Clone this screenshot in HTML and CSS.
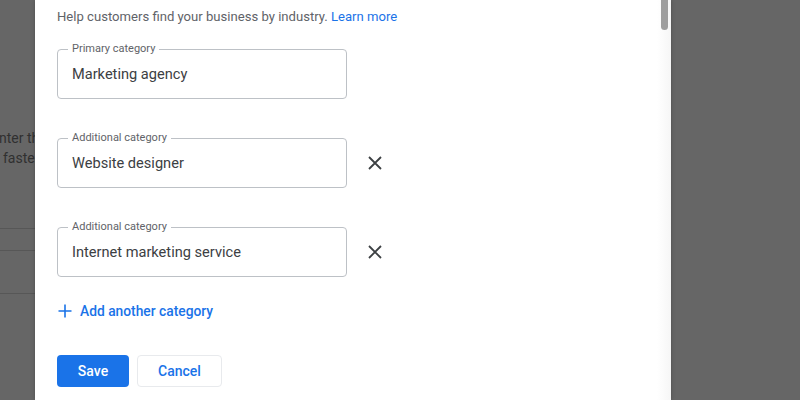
FILE: index.html
```html
<!DOCTYPE html>
<html lang="en">
<head>
<meta charset="utf-8">
<title>Business category</title>
<link rel="stylesheet" href="styles.css">
</head>
<body>
<div class="screen">
  <div class="backdrop-left">
    <div class="bg-text">
      <div class="bg-line1">Enter the</div>
      <div class="bg-line2">faster</div>
    </div>
    <div class="bg-rule rule-a"></div>
    <div class="bg-rule rule-b"></div>
    <div class="bg-rule rule-c"></div>
  </div>
  <div class="dialog">
    <div class="dialog-body">
      <p class="intro">Help customers find your business by industry. <a href="#">Learn more</a></p>
      <div class="fields">
        <div class="field-row">
          <div class="field">
            <span class="field-label">Primary category</span>
            <span class="field-value">Marketing agency</span>
          </div>
        </div>
        <div class="field-row">
          <div class="field">
            <span class="field-label">Additional category</span>
            <span class="field-value">Website designer</span>
          </div>
          <button class="remove" aria-label="Remove">
            <svg width="14" height="14" viewBox="0 0 14 14"><path d="M1 1L13 13M13 1L1 13" stroke="#3c4043" stroke-width="1.8" fill="none"/></svg>
          </button>
        </div>
        <div class="field-row">
          <div class="field">
            <span class="field-label">Additional category</span>
            <span class="field-value">Internet marketing service</span>
          </div>
          <button class="remove" aria-label="Remove">
            <svg width="14" height="14" viewBox="0 0 14 14"><path d="M1 1L13 13M13 1L1 13" stroke="#3c4043" stroke-width="1.8" fill="none"/></svg>
          </button>
        </div>
      </div>
      <button class="add">
        <svg width="14" height="14" viewBox="0 0 14 14"><path d="M7 0.5V13.5M0.5 7H13.5" stroke="#1a73e8" stroke-width="1.6" fill="none"/></svg>
        <span>Add another category</span>
      </button>
      <div class="actions">
        <button class="btn btn-primary">Save</button>
        <button class="btn btn-secondary">Cancel</button>
      </div>
    </div>
    <div class="scroll-track"><div class="scroll-thumb"></div></div>
  </div>
  <div class="backdrop-right"></div>
</div>
</body>
</html>
```
FILE: styles.css
```css
html, body {
  margin: 0;
  padding: 0;
}
body {
  width: 800px;
  height: 400px;
  overflow: hidden;
  background: #666666;
  font-family: Roboto, "Liberation Sans", Arial, sans-serif;
}
.screen {
  display: flex;
  height: 400px;
}
.backdrop-left {
  width: 35px;
  flex: none;
  overflow: hidden;
  position: relative;
}
.bg-text {
  padding-top: 128px;
  font-size: 14px;
  line-height: 20px;
  color: #303030;
  white-space: nowrap;
}
.bg-line1 {
  margin-left: -9px;
}
.bg-line2 {
  margin-left: 3px;
}
.bg-rule {
  position: absolute;
  left: 0;
  right: 0;
  height: 1px;
  background: #575757;
}
.rule-a { top: 228px; }
.rule-b { top: 250px; }
.rule-c { top: 293px; }

.dialog {
  width: 636px;
  flex: none;
  background: #ffffff;
  position: relative;
  box-shadow: 0 0 4px rgba(0, 0, 0, 0.25);
}
.backdrop-right {
  flex: 1;
}
.dialog-body {
  padding: 7px 0 0 22px;
}
.intro {
  margin: 0;
  font-size: 13.1px;
  line-height: 20px;
  color: #5f6368;
}
.intro a {
  color: #1a73e8;
  text-decoration: none;
}
.fields {
  margin-top: 22px;
  display: flex;
  flex-direction: column;
  gap: 39px;
}
.field-row {
  display: flex;
  align-items: center;
}
.field {
  position: relative;
  width: 290px;
  height: 50px;
  box-sizing: border-box;
  border: 1px solid #bdc1c6;
  border-radius: 4px;
  padding-left: 14px;
  display: flex;
  align-items: center;
}
.field-label {
  position: absolute;
  top: -8px;
  left: 10px;
  padding: 0 4px;
  background: #ffffff;
  font-size: 11px;
  line-height: 14px;
  color: #5f6368;
}
.field-value {
  font-size: 14.6px;
  color: #3c4043;
}
.remove {
  width: 40px;
  height: 40px;
  margin-left: 8px;
  border: 0;
  padding: 0;
  background: transparent;
  display: flex;
  align-items: center;
  justify-content: center;
}
.add {
  margin-top: 24px;
  border: 0;
  background: transparent;
  padding: 0 0 0 1px;
  height: 20px;
  display: flex;
  align-items: center;
  gap: 8px;
  font-family: inherit;
  font-size: 13.8px;
  font-weight: 500;
  color: #1a73e8;
}
.actions {
  margin-top: 34px;
  display: flex;
  gap: 8px;
}
.btn {
  height: 32px;
  box-sizing: border-box;
  padding: 0 20px;
  border-radius: 4px;
  font-family: inherit;
  font-size: 14px;
  font-weight: 500;
}
.btn-primary {
  background: #1a73e8;
  color: #ffffff;
  border: 0;
  width: 72px;
}
.btn-secondary {
  background: #ffffff;
  color: #1a73e8;
  border: 1px solid #e8eaed;
  width: 85px;
}
.scroll-track {
  position: absolute;
  top: 0;
  right: 0;
  width: 14px;
  height: 400px;
  background: linear-gradient(to right, #ffffff, #f6f6f6);
}
.scroll-thumb {
  position: absolute;
  top: 0;
  right: 3px;
  width: 7px;
  height: 30px;
  background: #9e9e9e;
  border-radius: 0 0 4px 4px;
}
```
